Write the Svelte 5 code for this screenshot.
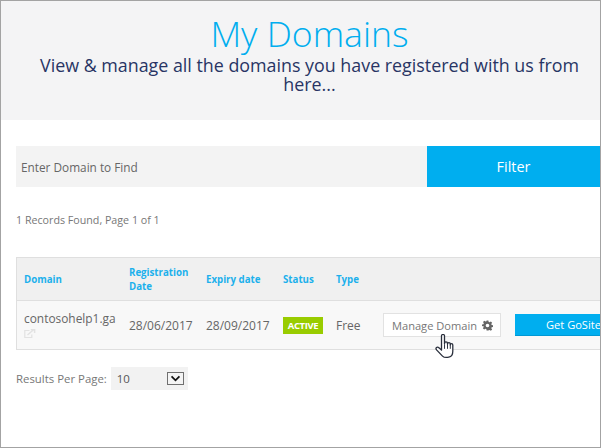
<script lang="ts">
  let query = $state('');
  let perPage = $state('10');

  const domains = [
    { name: 'contosohelp1.ga', registered: '28/06/2017', expiry: '28/09/2017', status: 'ACTIVE', type: 'Free' }
  ];
</script>

<div class="frame">
  <header class="hero">
    <h1>My Domains</h1>
    <p>View &amp; manage all the domains you have registered with us from here...</p>
  </header>

  <main class="content">
    <form class="filter" onsubmit={(e) => e.preventDefault()}>
      <input type="text" placeholder="Enter Domain to Find" bind:value={query} />
      <button type="submit">Filter</button>
    </form>

    <div class="records">1 Records Found, Page 1 of 1</div>

    <div class="table">
      <div class="row head">
        <div>Domain</div>
        <div>Registration Date</div>
        <div>Expiry date</div>
        <div>Status</div>
        <div>Type</div>
      </div>
      {#each domains as d}
        <div class="row body">
          <div class="name">
            <span>{d.name}</span>
            <svg class="ext" width="12" height="9" viewBox="0 0 12 9" fill="none" stroke="#e2e2e2" stroke-width="1.2">
              <path d="M5.500 1.500H.8v7h7V5.500" />
              <path d="M3.500 6 9.500 .8M6.800 .6h3.800v3.400" stroke-width="1.500" />
            </svg>
          </div>
          <div>{d.registered}</div>
          <div>{d.expiry}</div>
          <div><span class="badge">{d.status}</span></div>
          <div>{d.type}</div>
          <div class="actions">
            <button class="manage">
              Manage Domain
              <svg width="11" height="11" viewBox="0 0 24 24" fill="#666">
                <path fill-rule="evenodd" d="M10 1h4l.6 3.200 2 .8L19.300 3.200l2.800 2.800-1.800 2.700.8 2 3.200.600v4l-3.200.600-.8 2 1.800 2.700-2.800 2.800-2.700-1.800-2 .8L14 23h-4l-.6-3.200-2-.8-2.700 1.800-2.800-2.800 1.800-2.700-.8-2L0 13.700v-4l3.200-.6.800-2L2.200 4.400 5 1.600l2.700 1.800 2-.8zM12 8a4 4 0 1 0 0 8 4 4 0 0 0 0-8z" />
              </svg>
            </button>
            <button class="gosite">Get GoSite</button>
          </div>
        </div>
      {/each}
    </div>

    <div class="per-page">
      <span>Results Per Page:</span>
      <label class="select">
        <span class="value">{perPage}</span>
        <span class="arrow">
          <svg width="11" height="7" viewBox="0 0 12 8" fill="none" stroke="#111" stroke-width="2">
            <path d="M1.500 1.500 6 6l4.500-4.500" />
          </svg>
        </span>
      </label>
    </div>
  </main>

  <svg class="cursor" width="21" height="25" viewBox="0 0 21 27" preserveAspectRatio="none">
    <path
      d="M6.500 2c0-2 3-2 3 0v8.500c0-1 .2-2 1.500-2s1.500 1 1.500 2v.5c0-1 .3-1.700 1.400-1.700s1.400.8 1.400 1.800v.7c0-.9.400-1.400 1.200-1.400s1.300.6 1.300 1.500v6.600c0 3.500-1.800 6-4 6.500-2.500.6-5 .2-6.300-1.200L1.800 17.500c-1-1.300-1-2.400-.3-3s1.800-.3 2.700.6l2.300 2.400z"
      fill="#fff"
      stroke="#2a2f3c"
      stroke-width="1.300"
      stroke-linejoin="round"
    />
    <path d="M9.500 11v5M12.500 11v5M15.300 11.500V16" stroke="#2a2f3c" stroke-width="1" fill="none" />
  </svg>
</div>

<style>
  :global(body) {
    margin: 0;
    background: #fff;
    font-family: "Open Sans", "Liberation Sans", sans-serif;
  }

  .frame {
    position: relative;
    box-sizing: border-box;
    width: 601px;
    height: 448px;
    overflow: hidden;
    border: 1px solid #a3a3a3;
    background: #fff;
  }

  .hero {
    box-sizing: border-box;
    height: 119px;
    padding: 10px 15px 0 33px;
    background: #f4f4f5;
    text-align: center;
  }

  .hero h1 {
    margin: 0;
    font-size: 35.600px;
    line-height: 44px;
    font-weight: 300;
    color: #00aeef;
  }

  .hero p {
    margin: 1px 0 0;
    font-size: 17.850px;
    line-height: 19px;
    color: #283464;
  }

  .content {
    padding: 26px 0 0 15px;
  }

  .filter {
    display: flex;
    height: 41px;
  }

  .filter input {
    box-sizing: border-box;
    width: 411px;
    border: 0;
    padding: 0 5px;
    background: #f3f3f3;
    font: 11.800px "Open Sans", sans-serif;
    color: #666;
    outline: 0;
  }

  .filter input::placeholder {
    color: #666;
    opacity: 1;
  }

  .filter button {
    flex: 1;
    border: 0;
    background: #00aeef;
    color: #fff;
    font: 14.400px "Open Sans", sans-serif;
  }

  .records {
    margin-top: 26px;
    font-size: 10.700px;
    line-height: 14px;
    color: #777;
  }

  .table {
    width: 640px;
    margin-top: 30px;
    border: 1px solid #dfdfdf;
    border-width: 1px 0 1px 1px;
  }

  .row {
    display: grid;
    grid-template-columns: 112px 77px 77px 53px 47px 1fr;
    align-items: center;
  }

  .row > div:first-child {
    padding-left: 7px;
  }

  .head {
    box-sizing: border-box;
    height: 43px;
    padding-top: 1px;
    background: #f0f0f0;
    border-bottom: 1px solid #dfdfdf;
    font-size: 9.700px;
    line-height: 14px;
    font-weight: 700;
    color: #1cb0ec;
  }

  .body {
    height: 48px;
    background: #f8f8f8;
    font-size: 12px;
    color: #666;
  }

  .name {
    display: flex;
    flex-direction: column;
    align-items: flex-start;
    gap: 3px;
    margin-top: -2px;
  }

  .name span {
    line-height: 16px;
    font-size: 11.900px;
  }

  .ext {
    display: block;
  }

  .badge {
    display: inline-block;
    width: 40px;
    height: 17px;
    background: #9c0;
    color: #fff;
    font-size: 9.500px;
    font-weight: 700;
    line-height: 17px;
    text-align: center;
    letter-spacing: -0.4px;
  }

  .actions {
    display: flex;
    align-items: center;
    gap: 14px;
  }

  .actions button {
    box-sizing: border-box;
    font-family: inherit;
    font-size: 11.100px;
  }

  .manage {
    display: flex;
    align-items: center;
    justify-content: space-between;
    width: 118px;
    height: 24px;
    padding: 0 7px 0 8px;
    border: 1px solid #e2e2e2;
    background: #fff;
    color: #777;
    white-space: nowrap;
  }

  .gosite {
    width: 170px;
    height: 22px;
    padding: 0 0 0 31px;
    border: 0;
    border-bottom: 1px solid #0098d4;
    background: #00aeef;
    color: #fff;
    text-align: left;
  }

  .per-page {
    display: flex;
    align-items: center;
    gap: 4px;
    margin-top: 17px;
    font-size: 11.400px;
    color: #777;
  }

  .select {
    box-sizing: border-box;
    display: flex;
    align-items: center;
    justify-content: space-between;
    width: 77px;
    height: 23px;
    padding: 0 4px 0 6px;
    background: #f2f2f2;
    color: #555;
    font-size: 11.500px;
  }

  .arrow {
    box-sizing: border-box;
    display: flex;
    align-items: center;
    justify-content: center;
    width: 17px;
    height: 13px;
    border: 1px solid #707070;
    background: #f4f4f4;
  }

  .cursor {
    position: absolute;
    left: 434px;
    top: 333px;
  }
</style>
